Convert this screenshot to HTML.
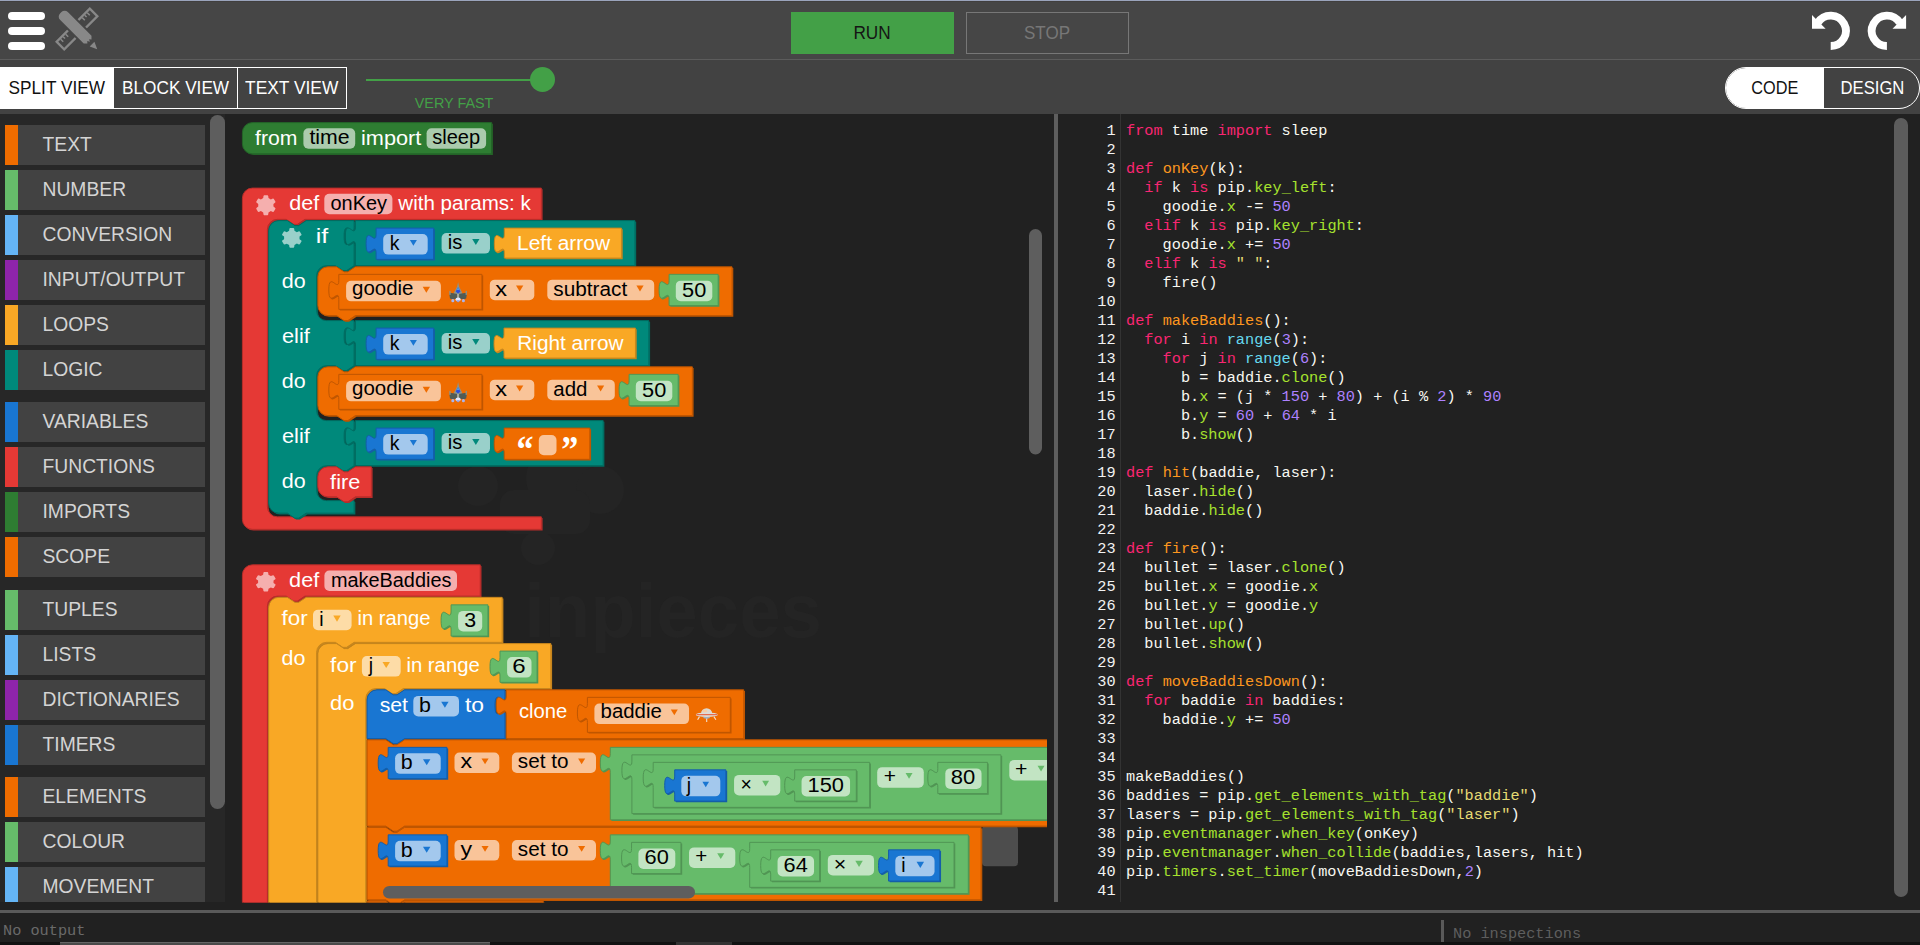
<!DOCTYPE html>
<html lang="en"><head><meta charset="utf-8"><title>Pip editor</title>
<style>
*{box-sizing:border-box}
html,body{margin:0;padding:0}
body{width:1920px;height:945px;overflow:hidden;background:#212121;font-family:"Liberation Sans",sans-serif;position:relative;color:#fff}
.abs{position:absolute}
.sx{display:inline-block;transform-origin:50% 50%}
#topline{left:0;top:0;width:1920px;height:1px;background:#9aa4bc;box-shadow:0 1px 0 #413f3e}
#bar1{left:0;top:1px;width:1920px;height:58px;background:#464646}
#bar1line{left:0;top:59px;width:1920px;height:1px;background:#5c5c5c}
#bar2{left:0;top:60px;width:1920px;height:54px;background:#424242}
.hb{left:8px;width:37px;height:8px;border-radius:4px;background:#fff}
#run{left:791px;top:12px;width:163px;height:42px;background:#43a047;color:#151515;font-size:18.5px;line-height:42px;text-align:center}
#stop{left:966px;top:12px;width:163px;height:42px;border:1px solid #777;color:#777;font-size:18.5px;line-height:40px;text-align:center}
.tab{top:67px;height:42px;font-size:18.5px;line-height:42px;text-align:center;white-space:nowrap}
#t1{left:0;width:113px;padding-left:1px;background:#fff;color:#111}
#t2{left:113px;width:125px;padding-left:1px;border:1px solid #fff;line-height:40px}
#t3{left:237px;width:110px;border:1px solid #fff;line-height:40px}
#sl{left:366px;top:79px;width:170px;height:2px;background:#43a047}
#knob{left:530px;top:67px;width:25px;height:25px;border-radius:50%;background:#43a047}
#vf{left:404px;top:94px;width:100px;text-align:center;color:#43a047;font-size:15.4px;line-height:18px}
#pill{left:1725px;top:67px;width:195px;height:42px;border-radius:21px;border:1px solid #fff;overflow:hidden}
#pcode{left:-1px;top:-1px;width:99px;height:42px;background:#fff;color:#111;font-size:18.5px;line-height:42px;text-align:center;padding-left:1px}
#pdesign{left:97px;top:-1px;width:98px;padding-right:1px;height:42px;border-left:1px solid #fff;font-size:18.5px;line-height:42px;text-align:center}
#side{left:0;top:114px;width:225px;height:788px;background:#272727;overflow:hidden}
.cat{position:absolute;left:5px;width:200px;height:40px;background:#424242;border-left:13px solid #000;color:#d4d4d4;font-size:19.3px;line-height:40px;white-space:nowrap}
.cat span{position:absolute;left:24.5px;top:-0.5px;letter-spacing:0}
#sscroll{left:210px;top:1px;width:15px;height:694px;border-radius:7.5px;background:#5e5e5e}
svg.ws{position:absolute;left:0;top:0}
#sep{left:1054px;top:114px;width:4px;height:788px;background:#5e5e5e}
#gutline{left:1120px;top:114px;width:1px;height:788px;background:#333}
#code{left:1058px;top:121.5px;width:840px;font-family:"Liberation Mono",monospace;font-size:15.25px;line-height:19px;color:#f8f8f2;white-space:pre}
.ln{height:19px;padding-left:68px;position:relative}
.ln i{position:absolute;left:0;width:57.6px;text-align:right;font-style:normal;color:#f2f2f2}
.k{color:#f92672}.f{color:#fd971f}.a{color:#a6e22e}.n{color:#ae81ff}.s{color:#e6db74}.b{color:#66d9ef}
#escroll{left:1894px;top:118px;width:14px;height:779px;border-radius:7px;background:#5c5c5c}
#hline{left:0;top:910px;width:1920px;height:3px;background:#5a5a5a}
#noout{left:3px;top:921.5px;font-family:"Liberation Mono",monospace;font-size:15.25px;line-height:19px;color:#6a6a6a}
#noinsp{left:1453px;top:924.5px;font-family:"Liberation Mono",monospace;font-size:15.25px;line-height:19px;color:#5e5e5e}
#inspbar{left:1441px;top:920px;width:3.4px;height:22px;background:#5a5a5a}
#bl0{left:0;top:942px;width:1920px;height:3px;background:#121212}
#bl1{left:60px;top:942px;width:430px;height:3px;background:#4a4a4a;border-top:1px solid #666}
#bl2{left:676px;top:942px;width:56px;height:3px;background:#333}
</style></head><body>
<div class="abs" id="bar1"></div><div class="abs" id="topline"></div><div class="abs" id="bar1line"></div><div class="abs" id="bar2"></div>
<div class="abs hb" style="top:12px"></div><div class="abs hb" style="top:27px"></div><div class="abs hb" style="top:42px"></div>
<svg class="abs" style="left:54px;top:6px" width="46" height="46" viewBox="0 0 46 46">
 <g transform="translate(23,23)" fill="#888">
  <g transform="rotate(-45)">
   <path fill-rule="evenodd" d="M-24.6,-6.5 h49.2 v13 h-49.2 z M-22.3,-4.2 v8.4 h44.6 v-8.4 z"/>
   <path d="M-19.5,-4.3 h1.5 v3.6 h-1.5z M-16,-4.3 h1.5 v2.6 h-1.5z M-12.5,-4.3 h1.5 v3.6 h-1.5z M11,-4.3 h1.5 v3.6 h-1.5z M14.5,-4.3 h1.5 v2.6 h-1.5z M18,-4.3 h1.5 v3.6 h-1.5z"/>
  </g>
  <g transform="rotate(45)">
   <rect x="-8.6" y="-7.4" width="17.2" height="14.8" fill="#464646"/>
   <path d="M-18.5,-5.5 H15 L17.6,-2.9 L15.8,-1.3 L18.2,0 L15.8,1.3 L17.6,2.9 L15,5.5 H-18.5 A4.5,4.5 0 0 1 -23,1 V-1 A4.5,4.5 0 0 1 -18.5,-5.5 Z"/>
   <path d="M21.3,-3.3 L28.6,0 L21.3,3.3 Z"/>
  </g>
 </g>
</svg>
<div class="abs" id="run"><span class="sx" style="transform:scaleX(.93)">RUN</span></div><div class="abs" id="stop"><span class="sx" style="transform:scaleX(.92)">STOP</span></div>
<svg class="abs" style="left:1800px;top:5px" width="120" height="52" viewBox="1800 5 120 52">
 <g fill="none" stroke="#fff" stroke-width="7.8">
  <path d="M1830.7,46 A15.2,15.2 0 1 0 1817.9,22.6"/>
  <path d="M1886.9,46 A15.2,15.2 0 1 1 1899.7,22.6"/>
 </g>
 <path d="M1812,15 V28.8 H1825.6 Z M1906.1,15 V28.8 H1892.5 Z" fill="#fff"/>
</svg>
<div class="abs tab" id="t1"><span class="sx" style="transform:scaleX(.932)">SPLIT VIEW</span></div><div class="abs tab" id="t2"><span class="sx" style="transform:scaleX(.93)">BLOCK VIEW</span></div><div class="abs tab" id="t3"><span class="sx" style="transform:scaleX(.939)">TEXT VIEW</span></div>
<div class="abs" id="sl"></div><div class="abs" id="knob"></div><div class="abs" id="vf"><span class="sx" style="transform:scaleX(.935)">VERY FAST</span></div>
<div class="abs" id="pill"><div class="abs" id="pcode"><span class="sx" style="transform:scaleX(.88)">CODE</span></div><div class="abs" id="pdesign"><span class="sx" style="transform:scaleX(.9)">DESIGN</span></div></div>
<div class="abs" id="side"><div class="cat" style="top:11px;border-left-color:#ef6c00"><span>TEXT</span></div><div class="cat" style="top:56px;border-left-color:#66bb6a"><span>NUMBER</span></div><div class="cat" style="top:101px;border-left-color:#64b5f6"><span>CONVERSION</span></div><div class="cat" style="top:146px;border-left-color:#8e24aa"><span>INPUT/OUTPUT</span></div><div class="cat" style="top:191px;border-left-color:#f9a825"><span>LOOPS</span></div><div class="cat" style="top:236px;border-left-color:#00897b"><span>LOGIC</span></div><div class="cat" style="top:288px;border-left-color:#1976d2"><span>VARIABLES</span></div><div class="cat" style="top:333px;border-left-color:#e53935"><span>FUNCTIONS</span></div><div class="cat" style="top:378px;border-left-color:#2e7d32"><span>IMPORTS</span></div><div class="cat" style="top:423px;border-left-color:#ef6c00"><span>SCOPE</span></div><div class="cat" style="top:476px;border-left-color:#66bb6a"><span>TUPLES</span></div><div class="cat" style="top:521px;border-left-color:#64b5f6"><span>LISTS</span></div><div class="cat" style="top:566px;border-left-color:#8e24aa"><span>DICTIONARIES</span></div><div class="cat" style="top:611px;border-left-color:#1976d2"><span>TIMERS</span></div><div class="cat" style="top:663px;border-left-color:#ef6c00"><span>ELEMENTS</span></div><div class="cat" style="top:708px;border-left-color:#66bb6a"><span>COLOUR</span></div><div class="cat" style="top:753px;border-left-color:#64b5f6"><span>MOVEMENT</span></div><div class="abs" id="sscroll"></div></div>
<svg class="ws" width="1920" height="945" viewBox="0 0 1920 945" font-family="Liberation Sans, sans-serif" font-size="19.5"><defs><clipPath id="wsclip"><rect x="226" y="114" width="821" height="788.5"/></clipPath></defs><g clip-path="url(#wsclip)"><g fill="#242424"><circle cx="478" cy="486" r="20"/><circle cx="560" cy="478" r="34"/><circle cx="600" cy="490" r="24"/><circle cx="538" cy="548" r="17"/><rect x="500" y="490" width="90" height="44" rx="14"/></g>
<text x="524" y="637" fill="#242424" font-size="76" font-weight="bold" textLength="298" lengthAdjust="spacingAndGlyphs">inpieces</text>
<rect x="982" y="826" width="36" height="40.3" rx="4" fill="#4d4d4d"/><g transform="translate(0.3,0.5)"><path d="M 242.1,132.1 A 10,10 0 0,1 252.1,122.1 H 491.35 v 31.25 H 252.1 a 10,10 0 0,1 -10,-10 z" fill="#246428" transform="translate(1.25,1.25)"/>
<path d="M 242.1,132.1 A 10,10 0 0,1 252.1,122.1 H 491.35 v 31.25 H 252.1 a 10,10 0 0,1 -10,-10 z" fill="#2e7d32" stroke="#246428" stroke-width="1"/>
<text x="254.7" y="144.15" fill="#fff" textLength="42.4" lengthAdjust="spacingAndGlyphs">from</text>
<rect x="303.1" y="127.75" width="51.8" height="20.5" rx="5" fill="#fff" fill-opacity=".6"/>
<text x="309.1" y="143.95" fill="#000" textLength="40.2" lengthAdjust="spacingAndGlyphs">time</text>
<text x="360.7" y="144.15" fill="#fff" textLength="60.3" lengthAdjust="spacingAndGlyphs">import</text>
<rect x="426.3" y="127.75" width="59.5" height="20.5" rx="5" fill="#fff" fill-opacity=".6"/>
<text x="431.9" y="143.95" fill="#000" textLength="47.9" lengthAdjust="spacingAndGlyphs">sleep</text>
<path d="M 242.1,197.6 A 10,10 0 0,1 252.1,187.6 H 541.05 v 31.25 H 304.6 l -7.5,5 -3.75,0 -7.5,-5 h -8.75 a 10,10 0 0,0 -10,10 v 277.5 a 10,10 0 0,0 10,10 H 541.05 v 12.5 H 252.1 a 10,10 0 0,1 -10,-10 z" fill="#b72d2a" transform="translate(1.25,1.25)"/>
<path d="M 242.1,197.6 A 10,10 0 0,1 252.1,187.6 H 541.05 v 31.25 H 304.6 l -7.5,5 -3.75,0 -7.5,-5 h -8.75 a 10,10 0 0,0 -10,10 v 277.5 a 10,10 0 0,0 10,10 H 541.05 v 12.5 H 252.1 a 10,10 0 0,1 -10,-10 z" fill="#e53935" stroke="#b72d2a" stroke-width="1"/>
<path d="m4.203,7.296 0,1.368 -0.92,0.677 -0.11,0.41 0.9,1.559 0.41,0.11 1.043,-0.457 1.187,0.683 0.127,1.134 0.3,0.3 1.8,0 0.3,-0.299 0.127,-1.138 1.185,-0.682 1.046,0.458 0.409,-0.11 0.9,-1.559 -0.11,-0.41 -0.92,-0.677 0,-1.366 0.92,-0.677 0.11,-0.41 -0.9,-1.559 -0.409,-0.109 -1.046,0.458 -1.185,-0.682 -0.127,-1.138 -0.3,-0.299 -1.8,0 -0.3,0.3 -0.126,1.135 -1.187,0.682 -1.043,-0.457 -0.41,0.11 -0.899,1.559 0.108,0.409z" fill="#fff" fill-opacity=".6" transform="translate(265.55,204.75) scale(1.98,1.95) translate(-8.04,-7.98)"/>
<text x="289" y="209.65" fill="#fff" textLength="30" lengthAdjust="spacingAndGlyphs">def</text>
<rect x="324" y="193.25" width="68.1" height="20.5" rx="5" fill="#fff" fill-opacity=".6"/>
<text x="330.2" y="209.45" fill="#000" textLength="56.5" lengthAdjust="spacingAndGlyphs">onKey</text>
<text x="398" y="209.65" fill="#fff" textLength="132.5" lengthAdjust="spacingAndGlyphs">with params: k</text>
<path d="M 268.35,230.1 A 10,10 0 0,1 278.35,220.1 H 287.1 l 7.5,5 3.75,0 7.5,-5 H 353.8 v 6.25 c 0,12.5 -10,-10 -10,9.38 s 10,-3.12 10,9.38 v 20 H 353.8 l -7.5,5 -3.75,0 -7.5,-5 h -8.75 a 10,10 0 0,0 -10,10 v 35 a 10,10 0 0,0 10,10 H 353.8 H 353.8 v 6.25 c 0,12.5 -10,-10 -10,9.38 s 10,-3.12 10,9.38 v 20 H 353.8 l -7.5,5 -3.75,0 -7.5,-5 h -8.75 a 10,10 0 0,0 -10,10 v 35 a 10,10 0 0,0 10,10 H 353.8 H 353.8 v 6.25 c 0,12.5 -10,-10 -10,9.38 s 10,-3.12 10,9.38 v 20 H 353.8 l -7.5,5 -3.75,0 -7.5,-5 h -8.75 a 10,10 0 0,0 -10,10 v 15 a 10,10 0 0,0 10,10 H 353.8 v 12.5 H 305.85 l -7.5,5 -3.75,0 -7.5,-5 H 278.35 a 10,10 0 0,1 -10,-10 z" fill="#006d62" transform="translate(1.25,1.25)"/>
<path d="M 268.35,230.1 A 10,10 0 0,1 278.35,220.1 H 287.1 l 7.5,5 3.75,0 7.5,-5 H 353.8 v 6.25 c 0,12.5 -10,-10 -10,9.38 s 10,-3.12 10,9.38 v 20 H 353.8 l -7.5,5 -3.75,0 -7.5,-5 h -8.75 a 10,10 0 0,0 -10,10 v 35 a 10,10 0 0,0 10,10 H 353.8 H 353.8 v 6.25 c 0,12.5 -10,-10 -10,9.38 s 10,-3.12 10,9.38 v 20 H 353.8 l -7.5,5 -3.75,0 -7.5,-5 h -8.75 a 10,10 0 0,0 -10,10 v 35 a 10,10 0 0,0 10,10 H 353.8 H 353.8 v 6.25 c 0,12.5 -10,-10 -10,9.38 s 10,-3.12 10,9.38 v 20 H 353.8 l -7.5,5 -3.75,0 -7.5,-5 h -8.75 a 10,10 0 0,0 -10,10 v 15 a 10,10 0 0,0 10,10 H 353.8 v 12.5 H 305.85 l -7.5,5 -3.75,0 -7.5,-5 H 278.35 a 10,10 0 0,1 -10,-10 z" fill="#00897b" stroke="#006d62" stroke-width="1"/>
<path d="m4.203,7.296 0,1.368 -0.92,0.677 -0.11,0.41 0.9,1.559 0.41,0.11 1.043,-0.457 1.187,0.683 0.127,1.134 0.3,0.3 1.8,0 0.3,-0.299 0.127,-1.138 1.185,-0.682 1.046,0.458 0.409,-0.11 0.9,-1.559 -0.11,-0.41 -0.92,-0.677 0,-1.366 0.92,-0.677 0.11,-0.41 -0.9,-1.559 -0.409,-0.109 -1.046,0.458 -1.185,-0.682 -0.127,-1.138 -0.3,-0.299 -1.8,0 -0.3,0.3 -0.126,1.135 -1.187,0.682 -1.043,-0.457 -0.41,0.11 -0.899,1.559 0.108,0.409z" fill="#fff" fill-opacity=".6" transform="translate(291.5,237.4) scale(2.01,1.92) translate(-8.04,-7.98)"/>
<text x="315.4" y="242.15" fill="#fff" textLength="12.6" lengthAdjust="spacingAndGlyphs">if</text>
<text x="281.4" y="287.35" fill="#fff" textLength="23.9" lengthAdjust="spacingAndGlyphs">do</text>
<text x="281.7" y="342.35" fill="#fff" textLength="27.9" lengthAdjust="spacingAndGlyphs">elif</text>
<text x="281.4" y="387.35" fill="#fff" textLength="23.9" lengthAdjust="spacingAndGlyphs">do</text>
<text x="281.7" y="442.45" fill="#fff" textLength="27.9" lengthAdjust="spacingAndGlyphs">elif</text>
<text x="281.4" y="487.45" fill="#fff" textLength="23.9" lengthAdjust="spacingAndGlyphs">do</text>
<path d="M 355.05,220.1 H 634.65 v 45 H 355.05 V 245.1 c 0,-12.5 -10,10 -10,-9.38 s 10,3.12 10,-9.38 z" fill="#006d62" transform="translate(1.25,1.25)"/>
<path d="M 355.05,220.1 H 634.65 v 45 H 355.05 V 245.1 c 0,-12.5 -10,10 -10,-9.38 s 10,3.12 10,-9.38 z" fill="#00897b" stroke="#006d62" stroke-width="1"/>
<path d="M 375.8,227.6 H 433.35 v 31.25 H 375.8 V 252.6 c 0,-12.5 -10,10 -10,-9.38 s 10,3.12 10,-9.38 z" fill="#145ea8" transform="translate(1.25,1.25)"/>
<path d="M 375.8,227.6 H 433.35 v 31.25 H 375.8 V 252.6 c 0,-12.5 -10,10 -10,-9.38 s 10,3.12 10,-9.38 z" fill="#1976d2" stroke="#145ea8" stroke-width="1"/>
<rect x="382.9" y="233.6" width="44.5" height="20.5" rx="5" fill="#fff" fill-opacity=".6"/>
<text x="394.3" y="249.55" fill="#000" text-anchor="middle">k</text>
<path d="M409.6,239.5 h7 l-3.5,5.74 z" fill="#1976d2"/>
<rect x="441.3" y="232.6" width="48.4" height="20.5" rx="5" fill="#fff" fill-opacity=".6"/>
<text x="447.5" y="248.55" fill="#000" textLength="14.6" lengthAdjust="spacingAndGlyphs">is</text>
<path d="M471.9,238.5 h7.3 l-3.65,5.99 z" fill="#00897b"/>
<path d="M 504,227.6 H 621.15 v 30 H 504 V 252.6 c 0,-12.5 -10,10 -10,-9.38 s 10,3.12 10,-9.38 z" fill="#c7861d" transform="translate(1.25,1.25)"/>
<path d="M 504,227.6 H 621.15 v 30 H 504 V 252.6 c 0,-12.5 -10,10 -10,-9.38 s 10,3.12 10,-9.38 z" fill="#f9a825" stroke="#c7861d" stroke-width="1"/>
<text x="516.8" y="249.35" fill="#fff" textLength="92.9" lengthAdjust="spacingAndGlyphs">Left arrow</text>
<path d="M 317.55,276.35 A 10,10 0 0,1 327.55,266.35 H 336.3 l 7.5,5 3.75,0 7.5,-5 H 731.75 v 48.75 H 355.05 l -7.5,5 -3.75,0 -7.5,-5 H 327.55 a 10,10 0 0,1 -10,-10 z" fill="#bf5600" transform="translate(1.25,1.25)"/>
<path d="M 317.55,276.35 A 10,10 0 0,1 327.55,266.35 H 336.3 l 7.5,5 3.75,0 7.5,-5 H 731.75 v 48.75 H 355.05 l -7.5,5 -3.75,0 -7.5,-5 H 327.55 a 10,10 0 0,1 -10,-10 z" fill="#ef6c00" stroke="#bf5600" stroke-width="1"/>
<path d="M 338.5,273.85 H 481.65 v 35 H 338.5 V 298.85 c 0,-12.5 -10,10 -10,-9.38 s 10,3.12 10,-9.38 z" fill="#bf5600" transform="translate(1.25,1.25)"/>
<path d="M 338.5,273.85 H 481.65 v 35 H 338.5 V 298.85 c 0,-12.5 -10,10 -10,-9.38 s 10,3.12 10,-9.38 z" fill="#ef6c00" stroke="#bf5600" stroke-width="1"/>
<rect x="345.8" y="280.35" width="94.8" height="20.5" rx="5" fill="#fff" fill-opacity=".6"/>
<text x="351.7" y="294.8" fill="#000" textLength="61.5" lengthAdjust="spacingAndGlyphs">goodie</text>
<path d="M422.4,286.25 h7.3 l-3.65,5.99 z" fill="#ef6c00"/>
<g transform="translate(448.5,281.4)"><path d="M9.3,0 L10.3,4.5 L13.5,11 L12,13 L9.3,15 L6.6,13 L5,11 L8.3,4.5 Z" fill="#8d9488"/><path d="M9.3,5.3 L11.7,9.5 L9.3,11.9 L6.9,9.5 Z" fill="#2c4fdc"/><path d="M9.3,5.3 L10.7,8 L7.9,8 Z" fill="#4f97ee"/><path d="M0.6,12.5 Q0.5,10.8 3,11.2 L8.4,12 L8.4,16.3 Q3.8,18 1.2,16.5 Z" fill="#515c55"/><path d="M18,12.5 Q18.1,10.8 15.6,11.2 L10.2,12 L10.2,16.3 Q14.8,18 17.4,16.5 Z" fill="#515c55"/><rect x="0.5" y="9" width="1.3" height="4" fill="#8d9488"/><rect x="16.8" y="9" width="1.3" height="4" fill="#8d9488"/><rect x="8.3" y="12" width="2" height="4.5" fill="#a7ac9f"/><ellipse cx="9.3" cy="17.6" rx="2.6" ry="1.9" fill="#dfe6ff"/><path d="M7.2,18.4 L11.4,18.4 L9.3,20.6 Z" fill="#8c9eea"/><ellipse cx="4" cy="18.8" rx="1.5" ry="1.6" fill="#a9b4ee"/><ellipse cx="14.6" cy="18.8" rx="1.5" ry="1.6" fill="#a9b4ee"/></g>
<rect x="489.5" y="279.15" width="44.5" height="20.5" rx="5" fill="#fff" fill-opacity=".6"/>
<text x="495" y="295.1" fill="#000" textLength="11.8" lengthAdjust="spacingAndGlyphs">x</text>
<path d="M515.7,285.05 h7.3 l-3.65,5.99 z" fill="#ef6c00"/>
<rect x="547" y="279.15" width="106.9" height="20.5" rx="5" fill="#fff" fill-opacity=".6"/>
<text x="553" y="295.1" fill="#000" textLength="73.9" lengthAdjust="spacingAndGlyphs">subtract</text>
<path d="M636.1,285.05 h7.2 l-3.6,5.9 z" fill="#ef6c00"/>
<path d="M 668.8,273.85 H 717.85 v 31.25 H 668.8 V 298.85 c 0,-12.5 -10,10 -10,-9.38 s 10,3.12 10,-9.38 z" fill="#519554" transform="translate(1.25,1.25)"/>
<path d="M 668.8,273.85 H 717.85 v 31.25 H 668.8 V 298.85 c 0,-12.5 -10,10 -10,-9.38 s 10,3.12 10,-9.38 z" fill="#66bb6a" stroke="#519554" stroke-width="1"/>
<rect x="675.5" y="280.15" width="36.5" height="20.5" rx="5" fill="#fff" fill-opacity=".6"/>
<text x="681.8" y="296.1" fill="#000" textLength="24.2" lengthAdjust="spacingAndGlyphs">50</text>
<path d="M 355.05,320.1 H 648.55 v 45 H 355.05 V 345.1 c 0,-12.5 -10,10 -10,-9.38 s 10,3.12 10,-9.38 z" fill="#006d62" transform="translate(1.25,1.25)"/>
<path d="M 355.05,320.1 H 648.55 v 45 H 355.05 V 345.1 c 0,-12.5 -10,10 -10,-9.38 s 10,3.12 10,-9.38 z" fill="#00897b" stroke="#006d62" stroke-width="1"/>
<path d="M 375.8,327.6 H 433.35 v 31.25 H 375.8 V 352.6 c 0,-12.5 -10,10 -10,-9.38 s 10,3.12 10,-9.38 z" fill="#145ea8" transform="translate(1.25,1.25)"/>
<path d="M 375.8,327.6 H 433.35 v 31.25 H 375.8 V 352.6 c 0,-12.5 -10,10 -10,-9.38 s 10,3.12 10,-9.38 z" fill="#1976d2" stroke="#145ea8" stroke-width="1"/>
<rect x="382.9" y="333.6" width="44.5" height="20.5" rx="5" fill="#fff" fill-opacity=".6"/>
<text x="394.3" y="349.55" fill="#000" text-anchor="middle">k</text>
<path d="M409.6,339.5 h7 l-3.5,5.74 z" fill="#1976d2"/>
<rect x="441.3" y="332.6" width="48.4" height="20.5" rx="5" fill="#fff" fill-opacity=".6"/>
<text x="447.5" y="348.55" fill="#000" textLength="14.6" lengthAdjust="spacingAndGlyphs">is</text>
<path d="M471.9,338.5 h7.3 l-3.65,5.99 z" fill="#00897b"/>
<path d="M 503.7,327.6 H 635.15 v 30 H 503.7 V 352.6 c 0,-12.5 -10,10 -10,-9.38 s 10,3.12 10,-9.38 z" fill="#c7861d" transform="translate(1.25,1.25)"/>
<path d="M 503.7,327.6 H 635.15 v 30 H 503.7 V 352.6 c 0,-12.5 -10,10 -10,-9.38 s 10,3.12 10,-9.38 z" fill="#f9a825" stroke="#c7861d" stroke-width="1"/>
<text x="517" y="349.35" fill="#fff" textLength="106.3" lengthAdjust="spacingAndGlyphs">Right arrow</text>
<path d="M 317.55,376.35 A 10,10 0 0,1 327.55,366.35 H 336.3 l 7.5,5 3.75,0 7.5,-5 H 692.05 v 48.75 H 355.05 l -7.5,5 -3.75,0 -7.5,-5 H 327.55 a 10,10 0 0,1 -10,-10 z" fill="#bf5600" transform="translate(1.25,1.25)"/>
<path d="M 317.55,376.35 A 10,10 0 0,1 327.55,366.35 H 336.3 l 7.5,5 3.75,0 7.5,-5 H 692.05 v 48.75 H 355.05 l -7.5,5 -3.75,0 -7.5,-5 H 327.55 a 10,10 0 0,1 -10,-10 z" fill="#ef6c00" stroke="#bf5600" stroke-width="1"/>
<path d="M 338.5,373.85 H 481.65 v 35 H 338.5 V 398.85 c 0,-12.5 -10,10 -10,-9.38 s 10,3.12 10,-9.38 z" fill="#bf5600" transform="translate(1.25,1.25)"/>
<path d="M 338.5,373.85 H 481.65 v 35 H 338.5 V 398.85 c 0,-12.5 -10,10 -10,-9.38 s 10,3.12 10,-9.38 z" fill="#ef6c00" stroke="#bf5600" stroke-width="1"/>
<rect x="345.8" y="380.35" width="94.8" height="20.5" rx="5" fill="#fff" fill-opacity=".6"/>
<text x="351.7" y="394.8" fill="#000" textLength="61.5" lengthAdjust="spacingAndGlyphs">goodie</text>
<path d="M422.4,386.25 h7.3 l-3.65,5.99 z" fill="#ef6c00"/>
<g transform="translate(448.5,381.4)"><path d="M9.3,0 L10.3,4.5 L13.5,11 L12,13 L9.3,15 L6.6,13 L5,11 L8.3,4.5 Z" fill="#8d9488"/><path d="M9.3,5.3 L11.7,9.5 L9.3,11.9 L6.9,9.5 Z" fill="#2c4fdc"/><path d="M9.3,5.3 L10.7,8 L7.9,8 Z" fill="#4f97ee"/><path d="M0.6,12.5 Q0.5,10.8 3,11.2 L8.4,12 L8.4,16.3 Q3.8,18 1.2,16.5 Z" fill="#515c55"/><path d="M18,12.5 Q18.1,10.8 15.6,11.2 L10.2,12 L10.2,16.3 Q14.8,18 17.4,16.5 Z" fill="#515c55"/><rect x="0.5" y="9" width="1.3" height="4" fill="#8d9488"/><rect x="16.8" y="9" width="1.3" height="4" fill="#8d9488"/><rect x="8.3" y="12" width="2" height="4.5" fill="#a7ac9f"/><ellipse cx="9.3" cy="17.6" rx="2.6" ry="1.9" fill="#dfe6ff"/><path d="M7.2,18.4 L11.4,18.4 L9.3,20.6 Z" fill="#8c9eea"/><ellipse cx="4" cy="18.8" rx="1.5" ry="1.6" fill="#a9b4ee"/><ellipse cx="14.6" cy="18.8" rx="1.5" ry="1.6" fill="#a9b4ee"/></g>
<rect x="489.5" y="379.15" width="44.5" height="20.5" rx="5" fill="#fff" fill-opacity=".6"/>
<text x="495" y="395.1" fill="#000" textLength="11.8" lengthAdjust="spacingAndGlyphs">x</text>
<path d="M515.7,385.05 h7.3 l-3.65,5.99 z" fill="#ef6c00"/>
<rect x="547" y="379.15" width="67.5" height="20.5" rx="5" fill="#fff" fill-opacity=".6"/>
<text x="553" y="395.1" fill="#000" textLength="34.1" lengthAdjust="spacingAndGlyphs">add</text>
<path d="M596.75,385.05 h7.15 l-3.57,5.86 z" fill="#ef6c00"/>
<path d="M 628.8,373.85 H 677.85 v 31.25 H 628.8 V 398.85 c 0,-12.5 -10,10 -10,-9.38 s 10,3.12 10,-9.38 z" fill="#519554" transform="translate(1.25,1.25)"/>
<path d="M 628.8,373.85 H 677.85 v 31.25 H 628.8 V 398.85 c 0,-12.5 -10,10 -10,-9.38 s 10,3.12 10,-9.38 z" fill="#66bb6a" stroke="#519554" stroke-width="1"/>
<rect x="635.5" y="380.15" width="36.5" height="20.5" rx="5" fill="#fff" fill-opacity=".6"/>
<text x="641.8" y="396.1" fill="#000" textLength="24.2" lengthAdjust="spacingAndGlyphs">50</text>
<path d="M 355.05,420.1 H 602.85 v 45 H 355.05 V 445.1 c 0,-12.5 -10,10 -10,-9.38 s 10,3.12 10,-9.38 z" fill="#006d62" transform="translate(1.25,1.25)"/>
<path d="M 355.05,420.1 H 602.85 v 45 H 355.05 V 445.1 c 0,-12.5 -10,10 -10,-9.38 s 10,3.12 10,-9.38 z" fill="#00897b" stroke="#006d62" stroke-width="1"/>
<path d="M 375.8,427.6 H 433.35 v 31.25 H 375.8 V 452.6 c 0,-12.5 -10,10 -10,-9.38 s 10,3.12 10,-9.38 z" fill="#145ea8" transform="translate(1.25,1.25)"/>
<path d="M 375.8,427.6 H 433.35 v 31.25 H 375.8 V 452.6 c 0,-12.5 -10,10 -10,-9.38 s 10,3.12 10,-9.38 z" fill="#1976d2" stroke="#145ea8" stroke-width="1"/>
<rect x="382.9" y="433.6" width="44.5" height="20.5" rx="5" fill="#fff" fill-opacity=".6"/>
<text x="394.3" y="449.55" fill="#000" text-anchor="middle">k</text>
<path d="M409.6,439.5 h7 l-3.5,5.74 z" fill="#1976d2"/>
<rect x="441.3" y="432.6" width="48.4" height="20.5" rx="5" fill="#fff" fill-opacity=".6"/>
<text x="447.5" y="448.55" fill="#000" textLength="14.6" lengthAdjust="spacingAndGlyphs">is</text>
<path d="M471.9,438.5 h7.3 l-3.65,5.99 z" fill="#00897b"/>
<path d="M 503.9,427.6 H 589.55 v 31.25 H 503.9 V 452.6 c 0,-12.5 -10,10 -10,-9.38 s 10,3.12 10,-9.38 z" fill="#bf5600" transform="translate(1.25,1.25)"/>
<path d="M 503.9,427.6 H 589.55 v 31.25 H 503.9 V 452.6 c 0,-12.5 -10,10 -10,-9.38 s 10,3.12 10,-9.38 z" fill="#ef6c00" stroke="#bf5600" stroke-width="1"/>
<text x="516.2" y="461.5" fill="#fff" font-family="Liberation Serif, serif" font-weight="bold" font-size="38" textLength="17" lengthAdjust="spacingAndGlyphs">“</text>
<rect x="538.5" y="434.6" width="17.7" height="20.2" rx="5" fill="#fff" fill-opacity=".6"/>
<text x="561" y="461.5" fill="#fff" font-family="Liberation Serif, serif" font-weight="bold" font-size="38" textLength="17" lengthAdjust="spacingAndGlyphs">”</text>
<path d="M 317.55,476.35 A 10,10 0 0,1 327.55,466.35 H 336.3 l 7.5,5 3.75,0 7.5,-5 H 371.05 v 30 H 355.05 l -7.5,5 -3.75,0 -7.5,-5 H 327.55 a 10,10 0 0,1 -10,-10 z" fill="#b72d2a" transform="translate(1.25,1.25)"/>
<path d="M 317.55,476.35 A 10,10 0 0,1 327.55,466.35 H 336.3 l 7.5,5 3.75,0 7.5,-5 H 371.05 v 30 H 355.05 l -7.5,5 -3.75,0 -7.5,-5 H 327.55 a 10,10 0 0,1 -10,-10 z" fill="#e53935" stroke="#b72d2a" stroke-width="1"/>
<text x="329.8" y="488.45" fill="#fff" textLength="30.2" lengthAdjust="spacingAndGlyphs">fire</text>
<path d="M 242.1,574.35 A 10,10 0 0,1 252.1,564.35 H 479.95 v 31.25 H 304.6 l -7.5,5 -3.75,0 -7.5,-5 h -8.75 a 10,10 0 0,0 -10,10 v 400 a 10,10 0 0,0 10,10 H 479.95 v 12.5 H 252.1 a 10,10 0 0,1 -10,-10 z" fill="#b72d2a" transform="translate(1.25,1.25)"/>
<path d="M 242.1,574.35 A 10,10 0 0,1 252.1,564.35 H 479.95 v 31.25 H 304.6 l -7.5,5 -3.75,0 -7.5,-5 h -8.75 a 10,10 0 0,0 -10,10 v 400 a 10,10 0 0,0 10,10 H 479.95 v 12.5 H 252.1 a 10,10 0 0,1 -10,-10 z" fill="#e53935" stroke="#b72d2a" stroke-width="1"/>
<path d="m4.203,7.296 0,1.368 -0.92,0.677 -0.11,0.41 0.9,1.559 0.41,0.11 1.043,-0.457 1.187,0.683 0.127,1.134 0.3,0.3 1.8,0 0.3,-0.299 0.127,-1.138 1.185,-0.682 1.046,0.458 0.409,-0.11 0.9,-1.559 -0.11,-0.41 -0.92,-0.677 0,-1.366 0.92,-0.677 0.11,-0.41 -0.9,-1.559 -0.409,-0.109 -1.046,0.458 -1.185,-0.682 -0.127,-1.138 -0.3,-0.299 -1.8,0 -0.3,0.3 -0.126,1.135 -1.187,0.682 -1.043,-0.457 -0.41,0.11 -0.899,1.559 0.108,0.409z" fill="#fff" fill-opacity=".6" transform="translate(265.5,581.25) scale(2.01,1.89) translate(-8.04,-7.98)"/>
<text x="288.8" y="586.45" fill="#fff" textLength="30.1" lengthAdjust="spacingAndGlyphs">def</text>
<rect x="324.1" y="570" width="132.6" height="20.5" rx="5" fill="#fff" fill-opacity=".6"/>
<text x="330.6" y="586.25" fill="#000" textLength="120.5" lengthAdjust="spacingAndGlyphs">makeBaddies</text>
<path d="M 268.35,606.85 A 10,10 0 0,1 278.35,596.85 H 287.1 l 7.5,5 3.75,0 7.5,-5 H 501.85 v 45 H 353.8 l -7.5,5 -3.75,0 -7.5,-5 h -8.75 a 10,10 0 0,0 -10,10 v 360 a 10,10 0 0,0 10,10 H 503.1 v 12.5 H 305.85 l -7.5,5 -3.75,0 -7.5,-5 H 278.35 a 10,10 0 0,1 -10,-10 z" fill="#c7861d" transform="translate(1.25,1.25)"/>
<path d="M 268.35,606.85 A 10,10 0 0,1 278.35,596.85 H 287.1 l 7.5,5 3.75,0 7.5,-5 H 501.85 v 45 H 353.8 l -7.5,5 -3.75,0 -7.5,-5 h -8.75 a 10,10 0 0,0 -10,10 v 360 a 10,10 0 0,0 10,10 H 503.1 v 12.5 H 305.85 l -7.5,5 -3.75,0 -7.5,-5 H 278.35 a 10,10 0 0,1 -10,-10 z" fill="#f9a825" stroke="#c7861d" stroke-width="1"/>
<text x="281.2" y="624.75" fill="#fff" textLength="26.2" lengthAdjust="spacingAndGlyphs">for</text>
<rect x="312.7" y="609.2" width="38.6" height="20.5" rx="5" fill="#fff" fill-opacity=".6"/>
<text x="321.2" y="625.15" fill="#000" text-anchor="middle">i</text>
<path d="M333,615.1 h7.4 l-3.7,6.07 z" fill="#f9a825"/>
<text x="357.2" y="624.75" fill="#fff" textLength="73.1" lengthAdjust="spacingAndGlyphs">in range</text>
<path d="M 450.8,604.35 H 487.65 v 31.25 H 450.8 V 629.35 c 0,-12.5 -10,10 -10,-9.38 s 10,3.12 10,-9.38 z" fill="#519554" transform="translate(1.25,1.25)"/>
<path d="M 450.8,604.35 H 487.65 v 31.25 H 450.8 V 629.35 c 0,-12.5 -10,10 -10,-9.38 s 10,3.12 10,-9.38 z" fill="#66bb6a" stroke="#519554" stroke-width="1"/>
<rect x="457.8" y="610.4" width="24.1" height="20.5" rx="5" fill="#fff" fill-opacity=".6"/>
<text x="463.9" y="626.35" fill="#000" textLength="11.9" lengthAdjust="spacingAndGlyphs">3</text>
<text x="281.2" y="664.05" fill="#fff" textLength="23.9" lengthAdjust="spacingAndGlyphs">do</text>
<path d="M 317.55,653.1 A 10,10 0 0,1 327.55,643.1 H 336.3 l 7.5,5 3.75,0 7.5,-5 H 550.55 v 45 H 403 l -7.5,5 -3.75,0 -7.5,-5 h -8.75 a 10,10 0 0,0 -10,10 v 310 a 10,10 0 0,0 10,10 H 551.8 v 12.5 H 355.05 l -7.5,5 -3.75,0 -7.5,-5 H 327.55 a 10,10 0 0,1 -10,-10 z" fill="#c7861d" transform="translate(1.25,1.25)"/>
<path d="M 317.55,653.1 A 10,10 0 0,1 327.55,643.1 H 336.3 l 7.5,5 3.75,0 7.5,-5 H 550.55 v 45 H 403 l -7.5,5 -3.75,0 -7.5,-5 h -8.75 a 10,10 0 0,0 -10,10 v 310 a 10,10 0 0,0 10,10 H 551.8 v 12.5 H 355.05 l -7.5,5 -3.75,0 -7.5,-5 H 327.55 a 10,10 0 0,1 -10,-10 z" fill="#f9a825" stroke="#c7861d" stroke-width="1"/>
<text x="329.8" y="671.45" fill="#fff" textLength="26.5" lengthAdjust="spacingAndGlyphs">for</text>
<rect x="361.6" y="655.6" width="38.8" height="20.5" rx="5" fill="#fff" fill-opacity=".6"/>
<text x="370.6" y="671.55" fill="#000" text-anchor="middle">j</text>
<path d="M382.2,661.5 h7.4 l-3.7,6.07 z" fill="#f9a825"/>
<text x="406.1" y="671.45" fill="#fff" textLength="73.4" lengthAdjust="spacingAndGlyphs">in range</text>
<path d="M 499.7,650.6 H 536.75 v 31.25 H 499.7 V 675.6 c 0,-12.5 -10,10 -10,-9.38 s 10,3.12 10,-9.38 z" fill="#519554" transform="translate(1.25,1.25)"/>
<path d="M 499.7,650.6 H 536.75 v 31.25 H 499.7 V 675.6 c 0,-12.5 -10,10 -10,-9.38 s 10,3.12 10,-9.38 z" fill="#66bb6a" stroke="#519554" stroke-width="1"/>
<rect x="506.8" y="656.6" width="24.4" height="20.5" rx="5" fill="#fff" fill-opacity=".6"/>
<text x="512" y="672.55" fill="#000" textLength="13.4" lengthAdjust="spacingAndGlyphs">6</text>
<text x="329.8" y="709.95" fill="#fff" textLength="24.4" lengthAdjust="spacingAndGlyphs">do</text>
<path d="M 366.75,699.35 A 10,10 0 0,1 376.75,689.35 H 385.5 l 7.5,5 3.75,0 7.5,-5 H 504.65 v 6.25 c 0,12.5 -10,-10 -10,9.38 s 10,-3.12 10,9.38 v 23.75 H 404.25 l -7.5,5 -3.75,0 -7.5,-5 H 366.75 z" fill="#145ea8" transform="translate(1.25,1.25)"/>
<path d="M 366.75,699.35 A 10,10 0 0,1 376.75,689.35 H 385.5 l 7.5,5 3.75,0 7.5,-5 H 504.65 v 6.25 c 0,12.5 -10,-10 -10,9.38 s 10,-3.12 10,9.38 v 23.75 H 404.25 l -7.5,5 -3.75,0 -7.5,-5 H 366.75 z" fill="#1976d2" stroke="#145ea8" stroke-width="1"/>
<text x="379.4" y="711.55" fill="#fff" textLength="28.3" lengthAdjust="spacingAndGlyphs">set</text>
<rect x="413" y="695.4" width="45.7" height="20.5" rx="5" fill="#fff" fill-opacity=".6"/>
<text x="418.7" y="711.35" fill="#000" textLength="11.9" lengthAdjust="spacingAndGlyphs">b</text>
<path d="M440.9,701.3 h7.4 l-3.7,6.07 z" fill="#1976d2"/>
<text x="464.6" y="711.55" fill="#fff" textLength="19.1" lengthAdjust="spacingAndGlyphs">to</text>
<path d="M 505.9,689.35 H 743.45 v 48.75 H 505.9 V 714.35 c 0,-12.5 -10,10 -10,-9.38 s 10,3.12 10,-9.38 z" fill="#bf5600" transform="translate(1.25,1.25)"/>
<path d="M 505.9,689.35 H 743.45 v 48.75 H 505.9 V 714.35 c 0,-12.5 -10,10 -10,-9.38 s 10,3.12 10,-9.38 z" fill="#ef6c00" stroke="#bf5600" stroke-width="1"/>
<text x="518.7" y="717.95" fill="#fff" textLength="48.4" lengthAdjust="spacingAndGlyphs">clone</text>
<path d="M 587.1,696.85 H 730 v 35 H 587.1 V 721.85 c 0,-12.5 -10,10 -10,-9.38 s 10,3.12 10,-9.38 z" fill="#bf5600" transform="translate(1.25,1.25)"/>
<path d="M 587.1,696.85 H 730 v 35 H 587.1 V 721.85 c 0,-12.5 -10,10 -10,-9.38 s 10,3.12 10,-9.38 z" fill="#ef6c00" stroke="#bf5600" stroke-width="1"/>
<rect x="594.1" y="703.1" width="94.65" height="20.5" rx="5" fill="#fff" fill-opacity=".6"/>
<text x="600.25" y="717.75" fill="#000" textLength="61.25" lengthAdjust="spacingAndGlyphs">baddie</text>
<path d="M670.5,709 h7 l-3.5,5.74 z" fill="#ef6c00"/>
<g transform="translate(695.6,707.8)"><path d="M1.7,11.5 L3.6,8.3 M20,11.5 L18,8.3 M10.8,8.8 V13.6" stroke="#f1dfd0" stroke-width="1.1" fill="none"/><ellipse cx="10.7" cy="9.3" rx="3.3" ry="1.1" fill="#9fb0c0"/><path d="M5.1,5.2 A5.6,5.2 0 0 1 16.3,5.2 Z" fill="#dcd9d2"/><ellipse cx="9" cy="2.8" rx="2.6" ry="1.7" fill="#f6cda6"/><ellipse cx="10.9" cy="6.4" rx="11" ry="2.3" fill="#dedcd8"/><rect x="0.6" y="5.9" width="20.8" height="1" fill="#e8502a"/></g>
<path d="M 366.75,739.35 H 385.5 l 7.5,5 3.75,0 7.5,-5 H 1165.5 v 86.25 H 404.25 l -7.5,5 -3.75,0 -7.5,-5 H 366.75 z" fill="#bf5600" transform="translate(1.25,1.25)"/>
<path d="M 366.75,739.35 H 385.5 l 7.5,5 3.75,0 7.5,-5 H 1165.5 v 86.25 H 404.25 l -7.5,5 -3.75,0 -7.5,-5 H 366.75 z" fill="#ef6c00" stroke="#bf5600" stroke-width="1"/>
<path d="M 387.9,746.85 H 446.65 v 31.25 H 387.9 V 771.85 c 0,-12.5 -10,10 -10,-9.38 s 10,3.12 10,-9.38 z" fill="#145ea8" transform="translate(1.25,1.25)"/>
<path d="M 387.9,746.85 H 446.65 v 31.25 H 387.9 V 771.85 c 0,-12.5 -10,10 -10,-9.38 s 10,3.12 10,-9.38 z" fill="#1976d2" stroke="#145ea8" stroke-width="1"/>
<rect x="394.8" y="752.85" width="45.6" height="20.5" rx="5" fill="#fff" fill-opacity=".6"/>
<text x="400.5" y="768.8" fill="#000" textLength="11.9" lengthAdjust="spacingAndGlyphs">b</text>
<path d="M422.7,758.75 h7.4 l-3.7,6.07 z" fill="#1976d2"/>
<rect x="454.2" y="752" width="44.8" height="20.5" rx="5" fill="#fff" fill-opacity=".6"/>
<text x="460.2" y="767.95" fill="#000" textLength="11.6" lengthAdjust="spacingAndGlyphs">x</text>
<path d="M481.2,757.9 h7.1 l-3.55,5.82 z" fill="#ef6c00"/>
<rect x="511.6" y="752" width="84.1" height="20.5" rx="5" fill="#fff" fill-opacity=".6"/>
<text x="517.5" y="767.95" fill="#000" textLength="50.6" lengthAdjust="spacingAndGlyphs">set to</text>
<path d="M577.8,757.9 h7.1 l-3.55,5.82 z" fill="#ef6c00"/>
<path d="M 610,746.85 H 1208.75 v 72.5 H 610 V 771.85 c 0,-12.5 -10,10 -10,-9.38 s 10,3.12 10,-9.38 z" fill="#519554" transform="translate(1.25,1.25)"/>
<path d="M 610,746.85 H 1208.75 v 72.5 H 610 V 771.85 c 0,-12.5 -10,10 -10,-9.38 s 10,3.12 10,-9.38 z" fill="#66bb6a" stroke="#519554" stroke-width="1"/>
<path d="M 631.6,754.35 H 1000.65 v 58.75 H 631.6 V 779.35 c 0,-12.5 -10,10 -10,-9.38 s 10,3.12 10,-9.38 z" fill="#519554" transform="translate(1.25,1.25)"/>
<path d="M 631.6,754.35 H 1000.65 v 58.75 H 631.6 V 779.35 c 0,-12.5 -10,10 -10,-9.38 s 10,3.12 10,-9.38 z" fill="#66bb6a" stroke="#519554" stroke-width="1"/>
<path d="M 652.9,761.85 H 869.35 v 45 H 652.9 V 786.85 c 0,-12.5 -10,10 -10,-9.38 s 10,3.12 10,-9.38 z" fill="#519554" transform="translate(1.25,1.25)"/>
<path d="M 652.9,761.85 H 869.35 v 45 H 652.9 V 786.85 c 0,-12.5 -10,10 -10,-9.38 s 10,3.12 10,-9.38 z" fill="#66bb6a" stroke="#519554" stroke-width="1"/>
<path d="M 674.4,769.35 H 725.65 v 31.25 H 674.4 V 794.35 c 0,-12.5 -10,10 -10,-9.38 s 10,3.12 10,-9.38 z" fill="#145ea8" transform="translate(1.25,1.25)"/>
<path d="M 674.4,769.35 H 725.65 v 31.25 H 674.4 V 794.35 c 0,-12.5 -10,10 -10,-9.38 s 10,3.12 10,-9.38 z" fill="#1976d2" stroke="#145ea8" stroke-width="1"/>
<rect x="681" y="775.35" width="39" height="20.5" rx="5" fill="#fff" fill-opacity=".6"/>
<text x="688.6" y="791.3" fill="#000" text-anchor="middle">j</text>
<path d="M702.1,781.25 h6.65 l-3.32,5.45 z" fill="#1976d2"/>
<rect x="733.75" y="774.4" width="46.25" height="20.5" rx="5" fill="#fff" fill-opacity=".6"/>
<text x="740.25" y="790.35" fill="#000" textLength="11.35" lengthAdjust="spacingAndGlyphs">×</text>
<path d="M761.9,780.3 h6.85 l-3.43,5.62 z" fill="#66bb6a"/>
<path d="M 794.4,769.35 H 856 v 31.25 H 794.4 V 794.35 c 0,-12.5 -10,10 -10,-9.38 s 10,3.12 10,-9.38 z" fill="#519554" transform="translate(1.25,1.25)"/>
<path d="M 794.4,769.35 H 856 v 31.25 H 794.4 V 794.35 c 0,-12.5 -10,10 -10,-9.38 s 10,3.12 10,-9.38 z" fill="#66bb6a" stroke="#519554" stroke-width="1"/>
<rect x="801.25" y="775.5" width="48.5" height="20.5" rx="5" fill="#fff" fill-opacity=".6"/>
<text x="807.3" y="791.45" fill="#000" textLength="36.4" lengthAdjust="spacingAndGlyphs">150</text>
<rect x="876.9" y="766.65" width="46.6" height="20.5" rx="5" fill="#fff" fill-opacity=".6"/>
<text x="883.4" y="782.6" fill="#000" textLength="12.2" lengthAdjust="spacingAndGlyphs">+</text>
<path d="M905.25,772.55 h7 l-3.5,5.74 z" fill="#66bb6a"/>
<path d="M 937.5,761.85 H 987.15 v 31.25 H 937.5 V 786.85 c 0,-12.5 -10,10 -10,-9.38 s 10,3.12 10,-9.38 z" fill="#519554" transform="translate(1.25,1.25)"/>
<path d="M 937.5,761.85 H 987.15 v 31.25 H 937.5 V 786.85 c 0,-12.5 -10,10 -10,-9.38 s 10,3.12 10,-9.38 z" fill="#66bb6a" stroke="#519554" stroke-width="1"/>
<rect x="945" y="767.9" width="36.25" height="20.5" rx="5" fill="#fff" fill-opacity=".6"/>
<text x="950.5" y="783.85" fill="#000" textLength="24.5" lengthAdjust="spacingAndGlyphs">80</text>
<rect x="1009" y="759.4" width="46.6" height="20.5" rx="5" fill="#fff" fill-opacity=".6"/>
<text x="1014.6" y="775.35" fill="#000" textLength="12.4" lengthAdjust="spacingAndGlyphs">+</text>
<path d="M1037.25,765.3 h7 l-3.5,5.74 z" fill="#66bb6a"/>
<path d="M 366.75,826.85 H 385.5 l 7.5,5 3.75,0 7.5,-5 H 980.75 v 72.5 H 404.25 l -7.5,5 -3.75,0 -7.5,-5 H 366.75 z" fill="#bf5600" transform="translate(1.25,1.25)"/>
<path d="M 366.75,826.85 H 385.5 l 7.5,5 3.75,0 7.5,-5 H 980.75 v 72.5 H 404.25 l -7.5,5 -3.75,0 -7.5,-5 H 366.75 z" fill="#ef6c00" stroke="#bf5600" stroke-width="1"/>
<path d="M 387.9,834.35 H 446.65 v 31.25 H 387.9 V 859.35 c 0,-12.5 -10,10 -10,-9.38 s 10,3.12 10,-9.38 z" fill="#145ea8" transform="translate(1.25,1.25)"/>
<path d="M 387.9,834.35 H 446.65 v 31.25 H 387.9 V 859.35 c 0,-12.5 -10,10 -10,-9.38 s 10,3.12 10,-9.38 z" fill="#1976d2" stroke="#145ea8" stroke-width="1"/>
<rect x="394.8" y="840.35" width="45.6" height="20.5" rx="5" fill="#fff" fill-opacity=".6"/>
<text x="400.5" y="856.3" fill="#000" textLength="11.9" lengthAdjust="spacingAndGlyphs">b</text>
<path d="M422.7,846.25 h7.4 l-3.7,6.07 z" fill="#1976d2"/>
<rect x="454.2" y="839.6" width="44.8" height="20.5" rx="5" fill="#fff" fill-opacity=".6"/>
<text x="460.2" y="855.55" fill="#000" textLength="11.6" lengthAdjust="spacingAndGlyphs">y</text>
<path d="M481.2,845.5 h7.1 l-3.55,5.82 z" fill="#ef6c00"/>
<rect x="511.6" y="839.6" width="84.1" height="20.5" rx="5" fill="#fff" fill-opacity=".6"/>
<text x="517.5" y="855.55" fill="#000" textLength="50.6" lengthAdjust="spacingAndGlyphs">set to</text>
<path d="M577.8,845.5 h7.1 l-3.55,5.82 z" fill="#ef6c00"/>
<path d="M 610,834.35 H 968 v 58.75 H 610 V 859.35 c 0,-12.5 -10,10 -10,-9.38 s 10,3.12 10,-9.38 z" fill="#519554" transform="translate(1.25,1.25)"/>
<path d="M 610,834.35 H 968 v 58.75 H 610 V 859.35 c 0,-12.5 -10,10 -10,-9.38 s 10,3.12 10,-9.38 z" fill="#66bb6a" stroke="#519554" stroke-width="1"/>
<path d="M 631.25,841.85 H 680.65 v 31.25 H 631.25 V 866.85 c 0,-12.5 -10,10 -10,-9.38 s 10,3.12 10,-9.38 z" fill="#519554" transform="translate(1.25,1.25)"/>
<path d="M 631.25,841.85 H 680.65 v 31.25 H 631.25 V 866.85 c 0,-12.5 -10,10 -10,-9.38 s 10,3.12 10,-9.38 z" fill="#66bb6a" stroke="#519554" stroke-width="1"/>
<rect x="638.1" y="848" width="36.9" height="20.5" rx="5" fill="#fff" fill-opacity=".6"/>
<text x="644.25" y="863.95" fill="#000" textLength="24.25" lengthAdjust="spacingAndGlyphs">60</text>
<rect x="688.75" y="846.9" width="46.25" height="20.5" rx="5" fill="#fff" fill-opacity=".6"/>
<text x="695" y="862.85" fill="#000" textLength="12" lengthAdjust="spacingAndGlyphs">+</text>
<path d="M716.9,852.8 h7.1 l-3.55,5.82 z" fill="#66bb6a"/>
<path d="M 749.4,841.85 H 953.75 v 45 H 749.4 V 866.85 c 0,-12.5 -10,10 -10,-9.38 s 10,3.12 10,-9.38 z" fill="#519554" transform="translate(1.25,1.25)"/>
<path d="M 749.4,841.85 H 953.75 v 45 H 749.4 V 866.85 c 0,-12.5 -10,10 -10,-9.38 s 10,3.12 10,-9.38 z" fill="#66bb6a" stroke="#519554" stroke-width="1"/>
<path d="M 770.4,849.35 H 819.35 v 31.25 H 770.4 V 874.35 c 0,-12.5 -10,10 -10,-9.38 s 10,3.12 10,-9.38 z" fill="#519554" transform="translate(1.25,1.25)"/>
<path d="M 770.4,849.35 H 819.35 v 31.25 H 770.4 V 874.35 c 0,-12.5 -10,10 -10,-9.38 s 10,3.12 10,-9.38 z" fill="#66bb6a" stroke="#519554" stroke-width="1"/>
<rect x="777.25" y="855.5" width="36.5" height="20.5" rx="5" fill="#fff" fill-opacity=".6"/>
<text x="783.3" y="871.45" fill="#000" textLength="24.2" lengthAdjust="spacingAndGlyphs">64</text>
<rect x="827.5" y="854.4" width="46.25" height="20.5" rx="5" fill="#fff" fill-opacity=".6"/>
<text x="833.5" y="870.35" fill="#000" textLength="12.5" lengthAdjust="spacingAndGlyphs">×</text>
<path d="M855,860.3 h7.5 l-3.75,6.15 z" fill="#66bb6a"/>
<path d="M 888.25,849.35 H 939.5 v 31.25 H 888.25 V 874.35 c 0,-12.5 -10,10 -10,-9.38 s 10,3.12 10,-9.38 z" fill="#145ea8" transform="translate(1.25,1.25)"/>
<path d="M 888.25,849.35 H 939.5 v 31.25 H 888.25 V 874.35 c 0,-12.5 -10,10 -10,-9.38 s 10,3.12 10,-9.38 z" fill="#1976d2" stroke="#145ea8" stroke-width="1"/>
<rect x="895" y="855.35" width="39.25" height="20.5" rx="5" fill="#fff" fill-opacity=".6"/>
<text x="903" y="871.3" fill="#000" text-anchor="middle">i</text>
<path d="M916.25,861.25 h7.5 l-3.75,6.15 z" fill="#1976d2"/>
<path d="M 366.75,900.6 H 385.5 l 7.5,5 3.75,0 7.5,-5 H 542.95 v 31.25 H 404.25 l -7.5,5 -3.75,0 -7.5,-5 H 366.75 z" fill="#bf5600" transform="translate(1.25,1.25)"/>
<path d="M 366.75,900.6 H 385.5 l 7.5,5 3.75,0 7.5,-5 H 542.95 v 31.25 H 404.25 l -7.5,5 -3.75,0 -7.5,-5 H 366.75 z" fill="#ef6c00" stroke="#bf5600" stroke-width="1"/></g><rect x="1029" y="229" width="13" height="225.5" rx="6.5" fill="#5e5e5e"/>
<rect x="383" y="886" width="312" height="12.5" rx="6.25" fill="#5e5e5e"/></g></svg>
<div class="abs" id="sep"></div><div class="abs" id="gutline"></div>
<div class="abs" id="code"><div class="ln"><i>1</i><span class="k">from</span> time <span class="k">import</span> sleep</div><div class="ln"><i>2</i></div><div class="ln"><i>3</i><span class="k">def</span> <span class="f">onKey</span>(k):</div><div class="ln"><i>4</i>  <span class="k">if</span> k <span class="k">is</span> pip.<span class="a">key_left</span>:</div><div class="ln"><i>5</i>    goodie.<span class="a">x</span> -= <span class="n">50</span></div><div class="ln"><i>6</i>  <span class="k">elif</span> k <span class="k">is</span> pip.<span class="a">key_right</span>:</div><div class="ln"><i>7</i>    goodie.<span class="a">x</span> += <span class="n">50</span></div><div class="ln"><i>8</i>  <span class="k">elif</span> k <span class="k">is</span> <span class="s">" "</span>:</div><div class="ln"><i>9</i>    fire()</div><div class="ln"><i>10</i></div><div class="ln"><i>11</i><span class="k">def</span> <span class="f">makeBaddies</span>():</div><div class="ln"><i>12</i>  <span class="k">for</span> i <span class="k">in</span> <span class="b">range</span>(<span class="n">3</span>):</div><div class="ln"><i>13</i>    <span class="k">for</span> j <span class="k">in</span> <span class="b">range</span>(<span class="n">6</span>):</div><div class="ln"><i>14</i>      b = baddie.<span class="a">clone</span>()</div><div class="ln"><i>15</i>      b.<span class="a">x</span> = (j * <span class="n">150</span> + <span class="n">80</span>) + (i % <span class="n">2</span>) * <span class="n">90</span></div><div class="ln"><i>16</i>      b.<span class="a">y</span> = <span class="n">60</span> + <span class="n">64</span> * i</div><div class="ln"><i>17</i>      b.<span class="a">show</span>()</div><div class="ln"><i>18</i></div><div class="ln"><i>19</i><span class="k">def</span> <span class="f">hit</span>(baddie, laser):</div><div class="ln"><i>20</i>  laser.<span class="a">hide</span>()</div><div class="ln"><i>21</i>  baddie.<span class="a">hide</span>()</div><div class="ln"><i>22</i></div><div class="ln"><i>23</i><span class="k">def</span> <span class="f">fire</span>():</div><div class="ln"><i>24</i>  bullet = laser.<span class="a">clone</span>()</div><div class="ln"><i>25</i>  bullet.<span class="a">x</span> = goodie.<span class="a">x</span></div><div class="ln"><i>26</i>  bullet.<span class="a">y</span> = goodie.<span class="a">y</span></div><div class="ln"><i>27</i>  bullet.<span class="a">up</span>()</div><div class="ln"><i>28</i>  bullet.<span class="a">show</span>()</div><div class="ln"><i>29</i></div><div class="ln"><i>30</i><span class="k">def</span> <span class="f">moveBaddiesDown</span>():</div><div class="ln"><i>31</i>  <span class="k">for</span> baddie <span class="k">in</span> baddies:</div><div class="ln"><i>32</i>    baddie.<span class="a">y</span> += <span class="n">50</span></div><div class="ln"><i>33</i></div><div class="ln"><i>34</i></div><div class="ln"><i>35</i>makeBaddies()</div><div class="ln"><i>36</i>baddies = pip.<span class="a">get_elements_with_tag</span>(<span class="s">"baddie"</span>)</div><div class="ln"><i>37</i>lasers = pip.<span class="a">get_elements_with_tag</span>(<span class="s">"laser"</span>)</div><div class="ln"><i>38</i>pip.<span class="a">eventmanager</span>.<span class="a">when_key</span>(onKey)</div><div class="ln"><i>39</i>pip.<span class="a">eventmanager</span>.<span class="a">when_collide</span>(baddies,lasers, hit)</div><div class="ln"><i>40</i>pip.<span class="a">timers</span>.<span class="a">set_timer</span>(moveBaddiesDown,<span class="n">2</span>)</div><div class="ln"><i>41</i></div></div>
<div class="abs" id="escroll"></div>
<div class="abs" id="hline"></div>
<div class="abs" id="noout">No output</div>
<div class="abs" id="inspbar"></div><div class="abs" id="noinsp">No inspections</div>
<div class="abs" id="bl0"></div><div class="abs" id="bl1"></div><div class="abs" id="bl2"></div>
</body></html>
